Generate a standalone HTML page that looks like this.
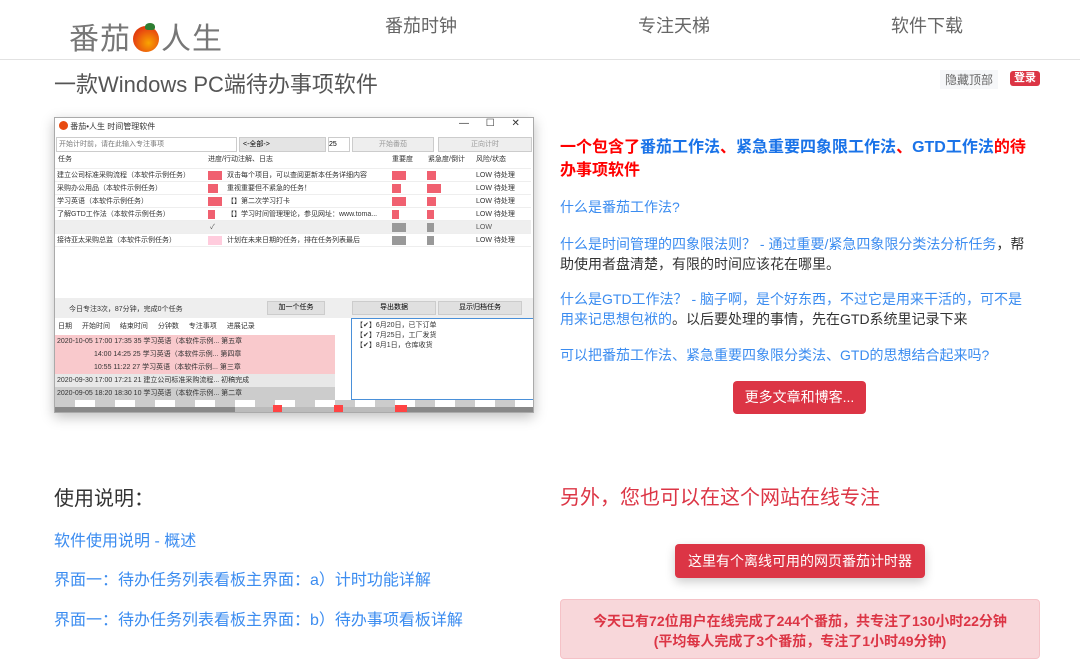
<!DOCTYPE html>
<html><head><meta charset="utf-8"><style>
*{margin:0;padding:0;box-sizing:border-box}
body{width:1080px;height:639px;overflow:hidden;background:#fff;font-family:"Liberation Sans","Noto Sans CJK SC",sans-serif;position:relative}
.a{position:absolute;white-space:nowrap}
.lk{color:#3b8cf0;font-size:14px}
.w{font-size:7px;color:#333;line-height:13px}
.row{position:absolute;left:0;width:476px;height:13px;border-bottom:1px solid #eee}
.row span{position:absolute;top:0}
.bar{position:absolute;height:9px;top:2px;background:#f06070}
</style></head><body>
<!-- header -->
<div class="a" style="left:69px;top:14px;font-size:30px;color:#777;letter-spacing:1px">番茄<span style="display:inline-block;width:26px;height:26px;border-radius:50%;background:radial-gradient(circle at 60% 65%,#f9a400,#e84a10 60%,#d02000);vertical-align:-3px;margin:0 2px;position:relative"><span style="position:absolute;left:12px;top:-3px;width:10px;height:7px;background:#2e7d32;border-radius:50% 50% 30% 30%"></span></span>人生</div>
<div class="a" style="left:385px;top:12px;font-size:18px;color:#666">番茄时钟</div>
<div class="a" style="left:638px;top:12px;font-size:18px;color:#666">专注天梯</div>
<div class="a" style="left:891px;top:12px;font-size:18px;color:#666">软件下载</div>
<div class="a" style="left:0;top:59px;width:1080px;height:1px;background:#e2e2e2"></div>
<div class="a" style="left:54px;top:67px;font-size:22px;color:#555">一款Windows PC端待办事项软件</div>
<div class="a" style="left:940px;top:70px;font-size:12px;color:#666;background:#f6f7f9;padding:1px 5px">隐藏顶部</div>
<div class="a" style="left:1010px;top:71px;font-size:11px;color:#fff;background:#dc3545;border-radius:3px;padding:0 4px;font-weight:bold;line-height:15px">登录</div>

<!-- screenshot -->
<div class="a" style="left:54px;top:117px;width:480px;height:296px;background:#fff;border:1px solid #aaa;box-shadow:0 4px 12px rgba(0,0,0,.25);overflow:hidden">
 <div class="a w" style="left:4px;top:2px;font-size:8px"><span style="display:inline-block;width:9px;height:9px;border-radius:50%;background:#e84a10;vertical-align:-1px"></span> 番茄•人生 时间管理软件</div>
 <div class="a" style="left:404px;top:0;font-size:10px;color:#333;word-spacing:14px">— ☐ ✕</div>
 <div class="a" style="left:1px;top:19px;width:181px;height:15px;border:1px solid #ccc;font-size:7px;color:#777;padding-left:2px;line-height:13px">开始计时前，请在此输入专注事项</div>
 <div class="a" style="left:184px;top:19px;width:87px;height:15px;background:#e4e4e4;border:1px solid #ccc;font-size:7px;line-height:13px;padding-left:3px">&lt;-全部-&gt;</div>
 <div class="a" style="left:273px;top:19px;width:22px;height:15px;border:1px solid #ccc;font-size:7px;line-height:13px">25</div>
 <div class="a" style="left:297px;top:19px;width:82px;height:15px;background:#eee;border:1px solid #ccc;font-size:7px;color:#999;text-align:center;line-height:13px">开始番茄</div>
 <div class="a" style="left:383px;top:19px;width:94px;height:15px;background:#eee;border:1px solid #ccc;font-size:7px;color:#999;text-align:center;line-height:13px">正向计时</div>
 <div class="a" style="left:0;top:35px;width:476px;height:195px">
  <div class="row w" style="top:0;height:16px"><span style="left:3px">任务</span><span style="left:153px">进度/行动注解、日志</span><span style="left:337px">重要度</span><span style="left:373px">紧急度/倒计</span><span style="left:421px">风险/状态</span></div>
  <div class="row w" style="top:16px"><span style="left:2px">建立公司标准采购流程（本软件示例任务）</span><div class="bar" style="left:153px;width:14px"></div><span style="left:172px">双击每个项目，可以查阅更新本任务详细内容</span><div class="bar" style="left:337px;width:14px"></div><div class="bar" style="left:372px;width:9px"></div><span style="left:421px">LOW 待处理</span></div>
  <div class="row w" style="top:29px"><span style="left:2px">采购办公用品（本软件示例任务）</span><div class="bar" style="left:153px;width:10px"></div><span style="left:172px">重视重要但不紧急的任务！</span><div class="bar" style="left:337px;width:9px"></div><div class="bar" style="left:372px;width:14px"></div><span style="left:421px">LOW 待处理</span></div>
  <div class="row w" style="top:42px"><span style="left:2px">学习英语（本软件示例任务）</span><div class="bar" style="left:153px;width:14px"></div><span style="left:172px">【】第二次学习打卡</span><div class="bar" style="left:337px;width:14px"></div><div class="bar" style="left:372px;width:9px"></div><span style="left:421px">LOW 待处理</span></div>
  <div class="row w" style="top:55px"><span style="left:2px">了解GTD工作法（本软件示例任务）</span><div class="bar" style="left:153px;width:7px"></div><span style="left:172px">【】学习时间管理理论，参见网址：www.toma...</span><div class="bar" style="left:337px;width:7px"></div><div class="bar" style="left:372px;width:7px"></div><span style="left:421px">LOW 待处理</span></div>
  <div class="row w" style="top:68px;background:#efefef;color:#ddd"><span style="left:155px;color:#555">✓</span><div class="bar" style="left:337px;width:14px;background:#999"></div><div class="bar" style="left:372px;width:7px;background:#999"></div><span style="left:421px;color:#555">LOW</span></div>
  <div class="row w" style="top:81px"><span style="left:2px">接待亚太采购总监（本软件示例任务）</span><div class="bar" style="left:153px;width:14px;background:#fcd"></div><span style="left:172px">计划在未来日期的任务，排在任务列表最后</span><div class="bar" style="left:337px;width:14px;background:#999"></div><div class="bar" style="left:372px;width:7px;background:#999"></div><span style="left:421px">LOW 待处理</span></div>
 </div>
 <div class="a" style="left:0;top:180px;width:480px;height:20px;background:#eee"></div>
 <div class="a w" style="left:14px;top:185px">今日专注3次，87分钟，完成0个任务</div>
 <div class="a" style="left:212px;top:183px;width:58px;height:14px;background:#e0e0e0;border:1px solid #ccc;font-size:7px;text-align:center;line-height:12px">加一个任务</div>
 <div class="a" style="left:297px;top:183px;width:84px;height:14px;background:#e0e0e0;border:1px solid #ccc;font-size:7px;text-align:center;line-height:12px">导出数据</div>
 <div class="a" style="left:383px;top:183px;width:84px;height:14px;background:#e0e0e0;border:1px solid #ccc;font-size:7px;text-align:center;line-height:12px">显示归档任务</div>
 <div class="a" style="left:0;top:200px;width:295px;height:82px;background:#fff">
  <div class="a w" style="left:3px;top:2px;word-spacing:8px">日期 开始时间 结束时间 分钟数 专注事项 进展记录</div>
  <div class="a" style="left:0;top:17px;width:280px;height:39px;background:#f9c9cc"></div>
  <div class="a" style="left:0;top:56px;width:280px;height:13px;background:#e8e8e8"></div>
  <div class="a" style="left:0;top:69px;width:280px;height:13px;background:#ccc"></div>
  <div class="a w" style="left:2px;top:17px;line-height:13px">2020-10-05 17:00 17:35 35 学习英语（本软件示例... 第五章<br>　　　　　 14:00 14:25 25 学习英语（本软件示例... 第四章<br>　　　　　 10:55 11:22 27 学习英语（本软件示例... 第三章<br>2020-09-30 17:00 17:21 21 建立公司标准采购流程... 初稿完成<br>2020-09-05 18:20 18:30 10 学习英语（本软件示例... 第二章</div>
 </div>
 <div class="a" style="left:296px;top:200px;width:183px;height:82px;border:1px solid #4a90d9"><div class="w" style="padding:2px 4px;line-height:10px">【✔】6月20日，已下订单<br>【✔】7月25日，工厂发货<br>【✔】8月1日，仓库收货</div></div>
 <div class="a" style="left:0;top:282px;width:480px;height:8px;background:repeating-linear-gradient(90deg,#ccc 0 20px,#fff 20px 40px)"></div>
 <div class="a" style="left:0;top:289px;width:480px;height:7px;background:#888"></div>
 <div class="a" style="left:180px;top:289px;width:160px;height:7px;background:#bbb"></div>
 <div class="a" style="left:218px;top:287px;width:9px;height:9px;background:#f44"></div>
 <div class="a" style="left:279px;top:287px;width:9px;height:9px;background:#f44"></div>
 <div class="a" style="left:340px;top:287px;width:12px;height:9px;background:#f44"></div>
</div>

<!-- right column -->
<div class="a" style="left:560px;top:136px;width:470px;white-space:normal;font-size:16px;font-weight:bold;line-height:23px;color:#f00">一个包含了<span style="color:#1a73e8">番茄工作法</span>、<span style="color:#1a73e8">紧急重要四象限工作法</span>、<span style="color:#1a73e8">GTD工作法</span>的待办事项软件</div>
<div class="a lk" style="left:560px;top:197px">什么是番茄工作法?</div>
<div class="a lk" style="left:560px;top:234px;width:475px;white-space:normal;line-height:20px">什么是时间管理的四象限法则？ - 通过重要/紧急四象限分类法分析任务<span style="color:#333">，帮助使用者盘清楚，有限的时间应该花在哪里。</span></div>
<div class="a lk" style="left:560px;top:289px;width:475px;white-space:normal;line-height:20px">什么是GTD工作法？ - 脑子啊，是个好东西，不过它是用来干活的，可不是用来记思想包袱的<span style="color:#333">。以后要处理的事情，先在GTD系统里记录下来</span></div>
<div class="a lk" style="left:560px;top:345px">可以把番茄工作法、紧急重要四象限分类法、GTD的思想结合起来吗?</div>
<div class="a" style="left:733px;top:381px;width:133px;height:33px;background:#dc3545;border-radius:4px;color:#fff;font-size:14px;text-align:center;line-height:33px">更多文章和博客...</div>

<!-- bottom -->
<div class="a" style="left:54px;top:482px;font-size:20px;color:#333">使用说明：</div>
<div class="a" style="left:54px;top:527px;font-size:16px;color:#3b8cf0">软件使用说明 - 概述</div>
<div class="a" style="left:54px;top:566px;font-size:16px;color:#3b8cf0">界面一：待办任务列表看板主界面：a）计时功能详解</div>
<div class="a" style="left:54px;top:606px;font-size:16px;color:#3b8cf0">界面一：待办任务列表看板主界面：b）待办事项看板详解</div>
<div class="a" style="left:560px;top:481px;font-size:20px;color:#dc3545">另外，您也可以在这个网站在线专注</div>
<div class="a" style="left:675px;top:544px;width:250px;height:34px;background:#dc3545;border-radius:4px;color:#fff;font-size:14px;text-align:center;line-height:34px;box-shadow:0 4px 10px rgba(0,0,0,.2)">这里有个离线可用的网页番茄计时器</div>
<div class="a" style="left:560px;top:599px;width:480px;height:60px;background:#f8d7da;border:1px solid #f5c2c7;border-radius:4px;color:#dc3545;font-size:14px;font-weight:bold;text-align:center;line-height:20px;padding-top:11px;white-space:normal">今天已有72位用户在线完成了244个番茄，共专注了130小时22分钟<br>(平均每人完成了3个番茄，专注了1小时49分钟)</div>
</body></html>
